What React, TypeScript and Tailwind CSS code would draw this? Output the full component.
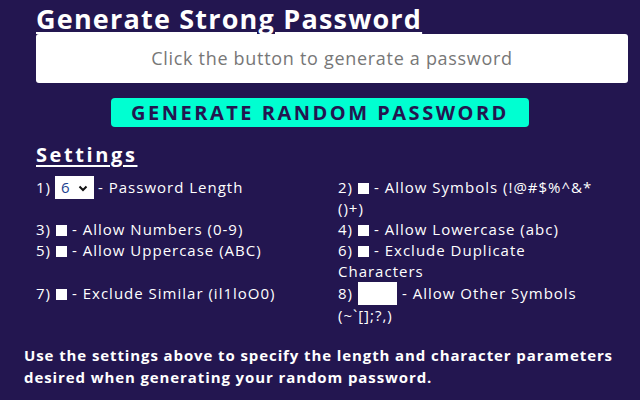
import React from "react";

const Check = () => (
  <span className="inline-block w-[11px] h-[11px] bg-white align-[-1px] mx-[5px]" />
);

const App: React.FC = () => {
  return (
    <div className="min-h-[400px] w-full bg-[#231650] text-white font-['Open_Sans',sans-serif] overflow-hidden">
      <div className="pl-9 pr-3">
        {/* TITLE */}
        <h1 className="text-[27px] leading-[37px] font-bold tracking-[1.2px] underline underline-offset-[3px] decoration-[2px]">
          Generate Strong Password
        </h1>

        {/* OUTPUT */}
        <div className="-mt-[3px] h-[49px] rounded-[3px] bg-white flex items-center justify-center text-[18px] tracking-[0.7px] text-[#777777]">
          Click the button to generate a password
        </div>
      </div>

      {/* BUTTON */}
      <div className="flex justify-center mt-[15px]">
        <button className="w-[418px] h-[29px] rounded-[4px] bg-[#00ffd1] text-[#231650] text-[20px] leading-[29px] font-bold tracking-[2.5px]">
          GENERATE RANDOM PASSWORD
        </button>
      </div>

      <div className="pl-9 pr-3">
        <h2 className="mt-[15px] text-[20px] leading-[26px] font-bold tracking-[2.6px] underline underline-offset-[3px] decoration-[2px]">
          Settings
        </h2>

        {/* SETTINGS GRID */}
        <div className="mt-[9px] grid grid-cols-[302px_1fr] text-[15px] leading-[21px] tracking-[1px]">
          <div className="flex items-start">
            <span>1)</span>
            <span className="mx-[4px] -mt-[1px] flex items-center justify-between w-[39px] h-[23px] bg-white px-[6px]">
              <span className="text-[#1b3f8f] text-[15px]">6</span>
              <svg width="10" height="8" viewBox="0 0 10 8">
                <path d="M1.5 2.5 L5 6 L8.5 2.5" stroke="#111" strokeWidth="2" fill="none" />
              </svg>
            </span>
            <span>- Password Length</span>
          </div>
          <div>
            2)<Check />- Allow Symbols (!@#$%^&amp;*
            <br />
            ()+)
          </div>

          <div>
            3)<Check />- Allow Numbers (0-9)
          </div>
          <div>
            4)<Check />- Allow Lowercase (abc)
          </div>

          <div>
            5)<Check />- Allow Uppercase (ABC)
          </div>
          <div>
            6)<Check />- Exclude Duplicate
            <br />
            Characters
          </div>

          <div className="pt-[1px]">
            7)<Check />- Exclude Similar (il1loO0)
          </div>
          <div>
            <div className="flex items-center">
              <span>8)</span>
              <span className="mx-[5px] inline-block w-[39px] h-[23px] bg-white" />
              <span>- Allow Other Symbols</span>
            </div>
            <div>(~`[];?,)</div>
          </div>
        </div>
      </div>

      {/* FOOTER */}
      <p className="mt-[18px] pl-6 pr-1 whitespace-nowrap text-[15px] leading-[22px] font-bold tracking-[0.9px]">
        Use the settings above to specify the length and character parameters
        <br />
        desired when generating your random password.
      </p>
    </div>
  );
};

export default App;
